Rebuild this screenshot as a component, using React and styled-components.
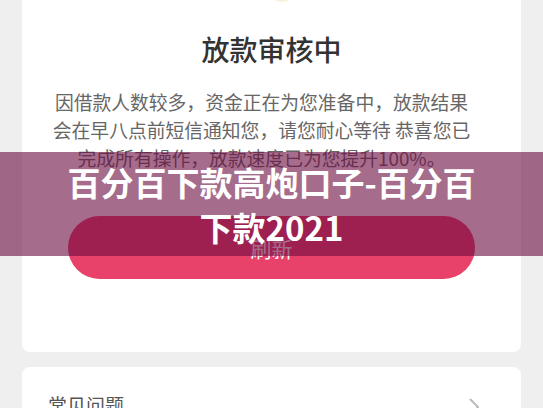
import React from "react";
import styled, { createGlobalStyle } from "styled-components";

const Global = createGlobalStyle`
  html, body { margin: 0; padding: 0; background: #efefef; overflow: hidden; }
  body { font-family: "Noto Sans CJK SC", "Noto Sans", sans-serif; }
`;

const Page = styled.div`
  position: relative;
  width: 543px;
  height: 408px;
  overflow: hidden;
  background: #efefef;
`;

const Column = styled.div`
  display: flex;
  flex-direction: column;
  gap: 15px;
  padding: 0 22px;
  margin-top: -20px;
`;

const Card = styled.div`
  background: #fff;
  border-radius: 8px;
  display: flex;
  flex-direction: column;
  align-items: center;
`;

const StatusCard = styled(Card)`
  padding: 0 0 73px;
`;

const IconStub = styled.div`
  width: 30px;
  height: 22px;
  margin-left: 20px;
  border-radius: 0 0 15px 15px;
  background: #f7f2dc;
`;

const Title = styled.h1`
  margin: 27px 0 0;
  font-size: 28px;
  line-height: 40px;
  font-weight: 500;
  color: #333;
`;

const Desc = styled.p`
  margin: 19px 20px 0 0;
  width: 424px;
  font-size: 18.8px;
  line-height: 28px;
  color: #666;
  text-align: center;
`;

const Button = styled.button`
  margin-top: 44px;
  width: 407px;
  height: 63px;
  border: none;
  border-radius: 32px;
  background: #e8416a;
  color: #fff;
  font-family: inherit;
  font-size: 21px;
`;

const FaqCard = styled(Card)`
  flex-direction: row;
  justify-content: space-between;
  align-items: flex-start;
  padding: 24px 40px 20px 26px;
  height: 60px;
  box-sizing: border-box;
`;

const FaqText = styled.span`
  font-size: 19px;
  color: #555;
  line-height: 28px;
`;

const Chevron = styled.svg`
  width: 14px;
  height: 20px;
  margin-top: 6px;
`;

const Banner = styled.div`
  position: absolute;
  left: 0;
  right: 0;
  top: 152px;
  height: 104px;
  display: flex;
  align-items: center;
  justify-content: center;
  background: rgba(106, 10, 63, 0.6);
`;

const BannerText = styled.div`
  width: 420px;
  text-align: center;
  color: #fff;
  font-weight: 700;
  font-size: 33px;
  line-height: 45px;
  padding-top: 2px;
`;

export default function App() {
  return (
    <Page>
      <Global />
      <Column>
        <StatusCard>
          <IconStub />
          <Title>放款审核中</Title>
          <Desc>
            因借款人数较多，资金正在为您准备中，放款结果会在早八点前短信通知您，请您耐心等待 恭喜您已完成所有操作，放款速度已为您提升100%。
          </Desc>
          <Button>刷新</Button>
        </StatusCard>
        <FaqCard>
          <FaqText>常见问题</FaqText>
          <Chevron viewBox="0 0 14 20">
            <path d="M3 2 L11 10 L3 18" fill="none" stroke="#bbb" strokeWidth="2" />
          </Chevron>
        </FaqCard>
      </Column>
      <Banner>
        <BannerText>百分百下款高炮口子-百分百下款2021</BannerText>
      </Banner>
    </Page>
  );
}
